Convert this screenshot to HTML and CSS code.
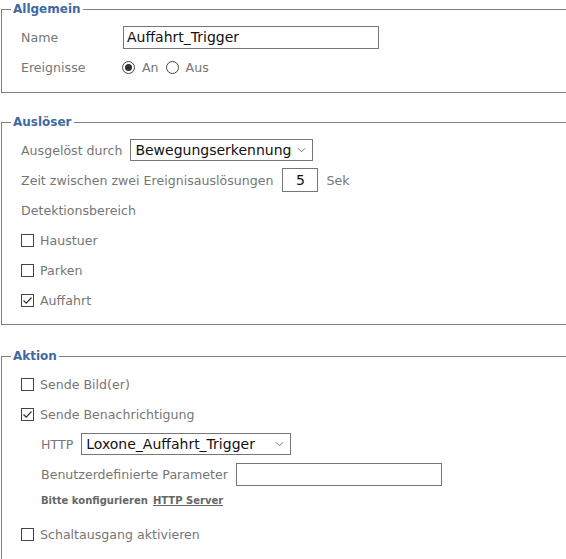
FILE: index.html
```html
<!DOCTYPE html>
<html lang="de">
<head>
<meta charset="utf-8">
<title>Ereignis</title>
<link rel="stylesheet" href="styles.css">
</head>
<body>
<fieldset class="group g1">
  <legend>Allgemein</legend>
  <div class="body">
    <div class="row tight">
      <span class="label wide">Name</span>
      <span class="textbox name-box">Auffahrt_Trigger</span>
    </div>
    <div class="row tight">
      <span class="label wide ereig">Ereignisse</span>
      <span class="radio on"></span><span class="label opt">An</span>
      <span class="radio"></span><span class="label opt">Aus</span>
    </div>
  </div>
</fieldset>

<fieldset class="group g2">
  <legend>Auslöser</legend>
  <div class="body">
    <div class="row">
      <span class="label">Ausgelöst durch</span>
      <span class="select sel-trigger">Bewegungserkennung<svg class="chev" viewBox="0 0 10 6" width="9" height="6"><path d="M1 1 L5 5 L9 1" fill="none" stroke="#666" stroke-width="1"/></svg></span>
    </div>
    <div class="row">
      <span class="label">Zeit zwischen zwei Ereignisauslösungen</span>
      <span class="textbox num">5</span>
      <span class="label">Sek</span>
    </div>
    <div class="row">
      <span class="label">Detektionsbereich</span>
    </div>
    <div class="row">
      <span class="check"></span><span class="label">Haustuer</span>
    </div>
    <div class="row">
      <span class="check"></span><span class="label">Parken</span>
    </div>
    <div class="row">
      <span class="check on"><svg viewBox="0 0 13 13" width="13" height="13"><path d="M2.5 6.5 L5.2 9.2 L10.5 3.5" fill="none" stroke="#333" stroke-width="1.2"/></svg></span><span class="label">Auffahrt</span>
    </div>
  </div>
</fieldset>

<fieldset class="group g3">
  <legend>Aktion</legend>
  <div class="body">
    <div class="row">
      <span class="check"></span><span class="label">Sende Bild(er)</span>
    </div>
    <div class="row">
      <span class="check on"><svg viewBox="0 0 13 13" width="13" height="13"><path d="M2.5 6.5 L5.2 9.2 L10.5 3.5" fill="none" stroke="#333" stroke-width="1.2"/></svg></span><span class="label">Sende Benachrichtigung</span>
    </div>
    <div class="sub">
      <div class="row">
        <span class="label">HTTP</span>
        <span class="select sel-http">Loxone_Auffahrt_Trigger<svg class="chev" viewBox="0 0 10 6" width="9" height="6"><path d="M1 1 L5 5 L9 1" fill="none" stroke="#666" stroke-width="1"/></svg></span>
      </div>
      <div class="row">
        <span class="label">Benutzerdefinierte Parameter</span>
        <span class="textbox param"></span>
      </div>
      <div class="note">Bitte konfigurieren <a class="link" href="#">HTTP Server</a></div>
    </div>
    <div class="row">
      <span class="check"></span><span class="label">Schaltausgang aktivieren</span>
    </div>
  </div>
</fieldset>
</body>
</html>
```

FILE: styles.css
```css
html, body {
  margin: 0;
  padding: 0;
  background: #fff;
  overflow: hidden;
}
body {
  padding-top: 1px;
  font-family: "DejaVu Sans", Verdana, sans-serif;
}
.group {
  margin: 0 0 0 1px;
  padding: 0;
  border: 1px solid #808080;
  border-right: 0;
  min-width: 0;
}
.g2 { margin-top: 21px; }
.g3 { margin-top: 23px; }
.group legend {
  margin-left: 9px;
  padding: 0 2px 0 2px;
  font-size: 12px;
  line-height: 16px;
  font-weight: bold;
  color: #4069a3;
}
.body {
  padding: 5px 0 10px 19px;
}
.g2 .body { padding-bottom: 9px; }
.g3 .body { padding-bottom: 20px; }
.row {
  height: 30px;
  display: flex;
  align-items: center;
  gap: 8px;
}
.row.tight { gap: 0; }
.label {
  font-size: 12.6px;
  color: #767676;
  white-space: nowrap;
}
.label.wide { width: 102px; }
.label.ereig { width: 101px; }
.label.opt { margin-left: 7px; margin-right: 7px; }
.textbox {
  box-sizing: border-box;
  border: 1px solid #767676;
  background: #fff;
  height: 23px;
  display: flex;
  align-items: center;
  font-size: 14px;
  color: #111;
  padding: 0 3px;
}
.name-box { width: 256px; }
.num { width: 36px; justify-content: center; height: 24px; margin-left: 1px; }
.param { width: 206px; }
.select {
  box-sizing: border-box;
  border: 1px solid #767676;
  background: #fff;
  height: 22px;
  display: flex;
  align-items: center;
  justify-content: space-between;
  font-size: 14px;
  color: #111;
  padding: 0 6px 0 4px;
}
.sel-trigger { width: 183px; }
.sel-http { width: 210px; }
.chev { flex: none; }
.radio {
  box-sizing: border-box;
  width: 13px;
  height: 13px;
  border: 1px solid #444;
  border-radius: 50%;
  display: flex;
  align-items: center;
  justify-content: center;
  flex: none;
}
.radio.on::after {
  content: "";
  width: 7px;
  height: 7px;
  border-radius: 50%;
  background: #333;
}
.check {
  box-sizing: border-box;
  width: 13px;
  height: 13px;
  border: 1px solid #444;
  flex: none;
  display: flex;
  margin-right: -2px;
}
.check svg { margin: -1px; }
.sub { padding-left: 20px; }
.sub .row { gap: 8px; }
.note {
  height: 22px;
  display: flex;
  align-items: center;
  gap: 5px;
  font-size: 10px;
  font-weight: bold;
  color: #666;
  margin-bottom: 8px;
}
.link {
  color: #666;
  text-decoration: underline;
}
```
